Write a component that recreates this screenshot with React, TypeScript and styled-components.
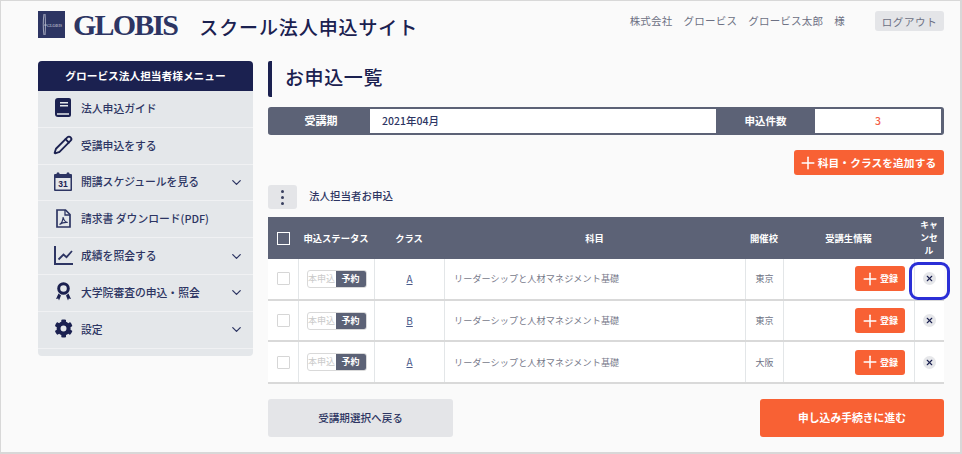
import styled, { createGlobalStyle } from "styled-components";
import { ChevronDown, Plus, X, Pencil } from "lucide-react";
import { ReactNode } from "react";

const GlobalStyle = createGlobalStyle`
  html, body { margin: 0; padding: 0; }
  body {
    background: #fafafa;
    font-family: "Noto Sans CJK JP", "Noto Sans", sans-serif;
    color: #1b2150;
  }
  * { box-sizing: border-box; }
`;

const Page = styled.div`
  width: 962px;
  height: 454px;
  overflow: hidden;
  border: 1px solid #d8d8d8;
  border-width: 1px 2px 2px 1px;
  padding: 0 16px 0 37px;
`;

const Header = styled.header`
  display: flex;
  align-items: flex-start;
  height: 60px;
  padding-top: 10px;
`;

const LogoMark = styled.svg`
  width: 27px;
  height: 27px;
  flex: none;
`;

const LogoWord = styled.div`
  margin-left: 8px;
  font-family: "Liberation Serif", serif;
  font-weight: 700;
  font-size: 30px;
  line-height: 27px;
  letter-spacing: -1.8px;
  color: #2d3563;
`;

const SiteTitle = styled.h1`
  margin: 4px 0 0 22px;
  font-size: 19px;
  line-height: 24px;
  font-weight: 500;
  letter-spacing: 0.9px;
  color: #1b2150;
`;

const UserArea = styled.div`
  margin-left: auto;
  display: flex;
  align-items: flex-start;
`;

const UserName = styled.span`
  margin-top: 3px;
  font-size: 10.5px;
  line-height: 14px;
  color: #6d7184;
  word-spacing: 8.6px;
  letter-spacing: 0.2px;
`;

const LogoutButton = styled.button`
  margin-left: 30px;
  width: 69px;
  height: 20px;
  padding: 0;
  border: none;
  border-radius: 3px;
  background: #e4e5e8;
  color: #6d7184;
  font: inherit;
  font-size: 10.5px;
  letter-spacing: 0.6px;
`;

const Body = styled.div`
  display: flex;
  gap: 15px;
`;

const Sidebar = styled.nav`
  width: 215px;
  flex: none;
  height: 295px;
  background: #e4e7ea;
  border-radius: 4px;
  overflow: hidden;
`;

const SidebarTitle = styled.div`
  height: 30px;
  background: #1b2150;
  color: #fff;
  font-size: 10.7px;
  font-weight: 700;
  line-height: 30px;
  text-align: center;
`;

const MenuRow = styled.div`
  display: flex;
  align-items: center;
  height: 36.8px;
  padding: 0 9px 2px 15px;
  border-bottom: 1px solid #f0f1f3;
  font-size: 10.8px;
  font-weight: 500;
  color: #2d3563;
`;

const MenuIcon = styled.span`
  width: 20px;
  height: 20px;
  display: flex;
  align-items: center;
  justify-content: center;
  margin-right: 8px;
  color: #1b2150;
`;

const MenuLabel = styled.span`
  flex: 1;
`;

const MenuChevron = styled(ChevronDown)`
  margin-top: 2px;
  color: #2d3563;
`;

const Main = styled.main`
  width: 676px;
  flex: none;
`;

const PageTitle = styled.h2`
  margin: 0;
  height: 36px;
  border-left: 4px solid #1b2150;
  border-radius: 2px;
  padding-left: 13px;
  font-size: 19px;
  font-weight: 500;
  line-height: 32px;
  letter-spacing: 0.6px;
  color: #1b2150;
`;

const InfoBar = styled.div`
  display: grid;
  grid-template-columns: 102px 346px 99px 1fr;
  height: 28px;
  margin-top: 10px;
  border: 3px solid #5c6276;
  border-width: 2px 3px 2px 0;
  border-radius: 3px;
  background: #5c6276;
`;

const InfoLabel = styled.div`
  color: #fff;
  font-size: 10.5px;
  font-weight: 700;
  line-height: 23px;
  text-align: center;
`;

const PeriodLabel = styled(InfoLabel)`
  padding-left: 4px;
  font-size: 11px;
`;

const InfoValue = styled.div<{ $accent?: boolean }>`
  background: #fff;
  font-size: 10.5px;
  font-weight: 500;
  line-height: 23px;
  padding-left: ${({ $accent }) => ($accent ? "0" : "12px")};
  color: ${({ $accent }) => ($accent ? "#f4604a" : "#2d3563")};
  text-align: ${({ $accent }) => ($accent ? "center" : "left")};
`;

const ActionRow = styled.div`
  display: flex;
  justify-content: flex-end;
  margin-top: 15px;
`;

const OrangeButton = styled.button`
  display: flex;
  align-items: center;
  justify-content: center;
  padding: 0;
  border: none;
  border-radius: 3px;
  background: #f86134;
  color: #fff;
  font: inherit;
  font-weight: 700;
`;

const AddButton = styled(OrangeButton)`
  width: 150px;
  height: 25px;
  font-size: 10.7px;
  letter-spacing: 0.1px;
  svg {
    margin: 0 0 0 -4px;
  }
`;

const SectionRow = styled.div`
  display: flex;
  align-items: center;
  margin-top: 10px;
  height: 24px;
`;

const KebabButton = styled.div`
  width: 29px;
  height: 24px;
  border-radius: 3px;
  background: #e4e5e8;
  display: flex;
  flex-direction: column;
  align-items: center;
  justify-content: center;
  gap: 3px;
`;

const KebabDot = styled.i`
  width: 3px;
  height: 3px;
  border-radius: 50%;
  background: #3a4060;
`;

const SectionTitle = styled.span`
  margin: 0 0 3px 12px;
  font-size: 10.5px;
  font-weight: 500;
  color: #2d3563;
`;

const columns = "30px 76px 70px 301px 38px 131px 30px";

const HeadRow = styled.div`
  display: grid;
  grid-template-columns: ${columns};
  height: 42px;
  margin-top: 8px;
  background: #5c6276;
  color: #fff;
  font-size: 9.3px;
  font-weight: 700;
`;

const HeadCell = styled.div`
  display: flex;
  align-items: center;
  justify-content: center;
  text-align: center;
`;

const CancelHead = styled(HeadCell)`
  font-size: 8.8px;
  line-height: 13px;
  padding-bottom: 1px;
`;

const HeadCheck = styled.span`
  width: 13px;
  height: 13px;
  border: 1.5px solid #fff;
`;

const Row = styled.div`
  display: grid;
  grid-template-columns: ${columns};
  height: 41.7px;
  background: #fff;
  border-bottom: 2px solid #d9d9d9;
`;

const Cell = styled.div<{ $align?: string }>`
  position: relative;
  display: flex;
  align-items: center;
  justify-content: ${({ $align }) => $align || "center"};
  border-left: 1px solid #e3e6e8;
  font-size: 9px;
  color: #6d7184;
  &:first-child { border-left: none; }
`;

const RowCheck = styled.span`
  width: 13px;
  height: 13px;
  border: 1px solid #d6d6d6;
  border-radius: 1px;
`;

const StatusToggle = styled.div`
  display: flex;
  width: 60px;
  height: 18px;
  border: 1px solid #d9d9d9;
  border-radius: 3px;
  overflow: hidden;
  font-size: 9px;
  line-height: 16px;
  white-space: nowrap;
`;

const StatusOff = styled.span`
  flex: 1;
  text-align: center;
  color: #c9c9c9;
`;

const StatusOn = styled.span`
  width: 30px;
  text-align: center;
  background: #5c6276;
  color: #fff;
  font-weight: 700;
`;

const ClassLink = styled.a`
  color: #4a5a8a;
  font-size: 10px;
  margin-bottom: 1px;
  text-decoration: underline;
`;

const SubjectText = styled.span`
  padding: 0 0 1px 9px;
  font-size: 9.1px;
  letter-spacing: 0.1px;
  color: #77798a;
`;

const RegisterButton = styled(OrangeButton)`
  width: 50px;
  height: 25px;
  margin-right: 9px;
  font-size: 9px;
  svg {
    margin-left: -2px;
  }
`;

const CancelDot = styled.span`
  width: 13px;
  height: 13px;
  border-radius: 50%;
  background: #e6e7ea;
  color: #1b2150;
  display: flex;
  align-items: center;
  justify-content: center;
`;

const Highlight = styled.span`
  position: absolute;
  left: -6px;
  top: 3px;
  width: 41px;
  height: 38px;
  border: 3.5px solid #2b2fd6;
  border-radius: 9px;
`;

const Footer = styled.div`
  display: flex;
  justify-content: space-between;
  margin-top: 15px;
`;

const BackButton = styled.button`
  width: 185px;
  height: 38px;
  padding: 0 0 2px;
  border: none;
  border-radius: 3px;
  background: #e4e5e8;
  color: #2d3563;
  font: inherit;
  font-size: 10.6px;
  font-weight: 500;
`;

const NextButton = styled(OrangeButton)`
  width: 184px;
  height: 38px;
  padding-bottom: 2px;
  font-size: 10.8px;
`;

const BookIcon = () => (
  <svg width="17" height="19" viewBox="0 0 17 19">
    <path
      fill="#1b2150"
      d="M3 0h11a2 2 0 0 1 2 2v15a2 2 0 0 1-2 2H3a3 3 0 0 1-3-3V3a3 3 0 0 1 3-3z"
    />
    <path fill="#e4e7ea" d="M2 15.200h12v1.600H2zM5 4h8v1.500H5zM5 7h8v1.500H5z" />
  </svg>
);

const CalendarIcon = () => (
  <svg width="18" height="19" viewBox="0 0 18 19">
    <path fill="#2d3563" d="M1 2h16a1 1 0 0 1 1 1v15a1 1 0 0 1-1 1H1a1 1 0 0 1-1-1V3a1 1 0 0 1 1-1z" />
    <circle cx="4" cy="1.800" r="1.500" fill="#2d3563" />
    <circle cx="14" cy="1.800" r="1.500" fill="#2d3563" />
    <rect x="1.500" y="6" width="15" height="11.500" fill="#e4e7ea" />
    <text x="9" y="15.200" textAnchor="middle" fontSize="8.500" fontWeight="700" fill="#1b2150" fontFamily="Liberation Sans">
      31
    </text>
  </svg>
);

const PdfIcon = () => (
  <svg width="15" height="19" viewBox="0 0 15 19" fill="none" stroke="#2d3563">
    <path strokeWidth="1.700" d="M1 1h8.500L14 5.500V18H1z" />
    <path strokeWidth="1.300" d="M9 1v5h5" />
    <path strokeWidth="1.200" d="M3.500 15.500c2.500-1.500 3.500-5 3.700-7.500.4 3 2 5 4.500 5.500-3-.3-6 .5-8.200 2z" />
  </svg>
);

const ChartIcon = () => (
  <svg width="19" height="19" viewBox="0 0 19 19" fill="none" stroke="#2d3563">
    <path strokeWidth="2" d="M1 0v18h18" />
    <path strokeWidth="1.800" d="M4.500 13.500l5-5 3 2.700L18 5" />
  </svg>
);

const AwardIcon = () => (
  <svg width="15" height="19" viewBox="0 0 15 19">
    <circle cx="7.500" cy="6.500" r="4.800" fill="none" stroke="#1b2150" strokeWidth="3" />
    <path fill="#1b2150" d="M2.500 11.500l2.500 2-2 5-.8-2-2.200.4zM12.500 11.500l-2.500 2 2 5 .8-2 2.200.4z" />
  </svg>
);

const GearIcon = () => (
  <svg width="19" height="19" viewBox="0 0 512 512">
    <path
      fill="#1b2150"
      d="M487 315l-42-25c4-23 4-46 0-69l42-25c5-3 7-8 5-14-11-35-29-66-53-92-4-4-9-5-14-2l-42 24c-18-15-38-27-60-35V29c0-6-4-10-9-11-36-8-73-8-108 0-6 1-9 5-9 11v48c-22 8-42 20-60 35L95 88c-5-3-11-2-14 2-24 26-42 57-53 92-2 6 0 11 5 14l42 25c-4 23-4 46 0 69l-42 25c-5 3-7 8-5 14 11 35 29 66 53 92 4 4 9 5 14 2l42-24c18 15 38 27 60 35v48c0 6 4 10 9 11 36 8 73 8 108 0 6-1 9-5 9-11v-48c22-8 42-20 60-35l42 24c5 3 11 2 14-2 24-26 42-57 53-92 2-6 0-11-5-14zM256 336a80 80 0 1 1 0-160 80 80 0 0 1 0 160z"
    />
  </svg>
);

type MenuEntry = { icon: ReactNode; label: string; more?: boolean };

const menu: MenuEntry[] = [
  { icon: <BookIcon />, label: "法人申込ガイド" },
  { icon: <Pencil size={20} strokeWidth={2.2} />, label: "受講申込をする" },
  { icon: <CalendarIcon />, label: "開講スケジュールを見る", more: true },
  { icon: <PdfIcon />, label: "請求書 ダウンロード(PDF)" },
  { icon: <ChartIcon />, label: "成績を照会する", more: true },
  { icon: <AwardIcon />, label: "大学院審査の申込・照会", more: true },
  { icon: <GearIcon />, label: "設定", more: true },
];

const rows = [
  { cls: "A", school: "東京", flagged: true },
  { cls: "B", school: "東京" },
  { cls: "A", school: "大阪" },
];

export default function App() {
  return (
    <Page>
      <GlobalStyle />
      <Header>
        <LogoMark viewBox="0 0 27 27">
          <rect width="27" height="27" fill="#2d3563" />
          <path d="M6 3c-1 6-1 15 0 21M7 3c.6 6 .6 15 0 21" stroke="#d6d9e4" strokeWidth="0.7" fill="none" />
          <path d="M6 14h3" stroke="#d6d9e4" strokeWidth="0.7" />
          <text x="9" y="15.500" fontSize="4.200" fill="#cfd2de" fontFamily="Liberation Serif">
            GLOBIS
          </text>
        </LogoMark>
        <LogoWord>GLOBIS</LogoWord>
        <SiteTitle>スクール法人申込サイト</SiteTitle>
        <UserArea>
          <UserName>株式会社 グロービス グロービス太郎 様</UserName>
          <LogoutButton>ログアウト</LogoutButton>
        </UserArea>
      </Header>
      <Body>
        <Sidebar>
          <SidebarTitle>グロービス法人担当者様メニュー</SidebarTitle>
          {menu.map((item) => (
            <MenuRow key={item.label}>
              <MenuIcon>{item.icon}</MenuIcon>
              <MenuLabel>{item.label}</MenuLabel>
              {item.more && <MenuChevron size={15} strokeWidth={2} />}
            </MenuRow>
          ))}
        </Sidebar>
        <Main>
          <PageTitle>お申込一覧</PageTitle>
          <InfoBar>
            <PeriodLabel>受講期</PeriodLabel>
            <InfoValue>2021年04月</InfoValue>
            <InfoLabel>申込件数</InfoLabel>
            <InfoValue $accent>3</InfoValue>
          </InfoBar>
          <ActionRow>
            <AddButton>
              <Plus size={20} strokeWidth={1.8} />
              科目・クラスを追加する
            </AddButton>
          </ActionRow>
          <SectionRow>
            <KebabButton>
              <KebabDot />
              <KebabDot />
              <KebabDot />
            </KebabButton>
            <SectionTitle>法人担当者お申込</SectionTitle>
          </SectionRow>
          <HeadRow>
            <HeadCell>
              <HeadCheck />
            </HeadCell>
            <HeadCell>申込ステータス</HeadCell>
            <HeadCell>クラス</HeadCell>
            <HeadCell>科目</HeadCell>
            <HeadCell>開催校</HeadCell>
            <HeadCell>受講生情報</HeadCell>
            <CancelHead>
              キャ
              <br />
              ンセ
              <br />
              ル
            </CancelHead>
          </HeadRow>
          {rows.map((row, i) => (
            <Row key={i}>
              <Cell>
                <RowCheck />
              </Cell>
              <Cell>
                <StatusToggle>
                  <StatusOff>本申込</StatusOff>
                  <StatusOn>予約</StatusOn>
                </StatusToggle>
              </Cell>
              <Cell>
                <ClassLink>{row.cls}</ClassLink>
              </Cell>
              <Cell $align="flex-start">
                <SubjectText>リーダーシップと人材マネジメント基礎</SubjectText>
              </Cell>
              <Cell>{row.school}</Cell>
              <Cell $align="flex-end">
                <RegisterButton>
                  <Plus size={20} strokeWidth={1.8} />
                  登録
                </RegisterButton>
              </Cell>
              <Cell>
                <CancelDot>
                  <X size={9} strokeWidth={3} />
                </CancelDot>
                {row.flagged && <Highlight />}
              </Cell>
            </Row>
          ))}
          <Footer>
            <BackButton>受講期選択へ戻る</BackButton>
            <NextButton>申し込み手続きに進む</NextButton>
          </Footer>
        </Main>
      </Body>
    </Page>
  );
}
